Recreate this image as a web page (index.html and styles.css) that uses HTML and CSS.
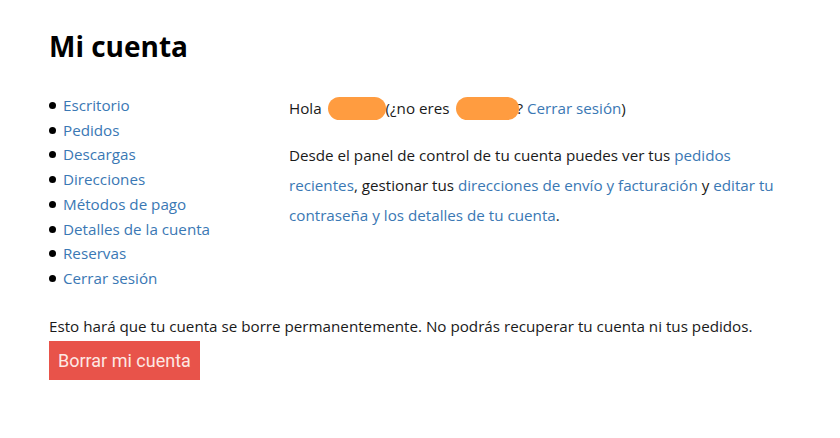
FILE: index.html
```html
<!DOCTYPE html>
<html lang="es">
<head>
    <meta charset="UTF-8">
    <meta name="viewport" content="width=device-width, initial-scale=1.0">
    <title>Mi cuenta</title>
    <link rel="stylesheet" href="styles.css">
</head>
<body>
    <div class="account">
        <h1 class="account-title">Mi cuenta</h1>
        <div class="account-body">
            <ul class="account-nav">
                <li><a href="#">Escritorio</a></li>
                <li><a href="#">Pedidos</a></li>
                <li><a href="#">Descargas</a></li>
                <li><a href="#">Direcciones</a></li>
                <li><a href="#">Métodos de pago</a></li>
                <li><a href="#">Detalles de la cuenta</a></li>
                <li><a href="#">Reservas</a></li>
                <li><a href="#">Cerrar sesión</a></li>
            </ul>
            <div class="account-content">
                <p class="greeting">Hola <span class="redacted">usuario</span>(¿no eres <span class="redacted redacted-wide">usuario</span>? <a href="#">Cerrar sesión</a>)</p>
                <p class="intro">Desde el panel de control de tu cuenta puedes ver tus <a href="#">pedidos recientes</a>, gestionar tus <a href="#">direcciones de envío y facturación</a> y <a href="#">editar tu contraseña y los detalles de tu cuenta</a>.</p>
            </div>
        </div>
        <p class="delete-note">Esto hará que tu cuenta se borre permanentemente. No podrás recuperar tu cuenta ni tus pedidos.</p>
        <button class="delete-btn">Borrar mi cuenta</button>
    </div>
</body>
</html>
```

FILE: styles.css
```css
body {
    margin: 0;
    background: #fff;
    color: #1a1a1a;
    font-family: 'Open Sans', sans-serif;
    font-size: 15.2px;
}
a {
    color: #3a78b4;
    text-decoration: none;
}
.account {
    padding: 26px 49px;
}
.account-title {
    margin: 0 0 27px;
    font-size: 28px;
    font-weight: 700;
    line-height: 40px;
    color: #000;
}
.account-body {
    display: flex;
}
.account-nav {
    width: 226px;
    margin: 0;
    padding: 0 0 0 14px;
    list-style: none;
    line-height: 24.7px;
}
.account-nav li {
    position: relative;
}
.account-nav li::before {
    content: "";
    position: absolute;
    left: -14px;
    top: 9px;
    width: 7px;
    height: 7px;
    border-radius: 50%;
    background: #000;
}
.account-content {
    flex: 1;
}
.account-content p {
    margin: 0;
}
.greeting {
    padding-top: 3px;
    line-height: 24px;
    margin-bottom: 20px !important;
}
.intro {
    line-height: 30px;
}
.redacted {
    display: inline-block;
    width: 58px;
    height: 23px;
    margin-left: 2px;
    vertical-align: -6px;
    border-radius: 12px;
    background: #ff9c40;
    color: transparent;
    overflow: hidden;
}
.redacted-wide {
    width: 63px;
    margin-left: 3px;
    margin-right: -3px;
    position: relative;
}
.delete-note {
    margin: 25px 0 5px;
    line-height: 20px;
}
.delete-btn {
    padding: 10px 9px 9px;
    border: none;
    border-radius: 0;
    background: #e8534a;
    color: #fde8e4;
    font-family: Roboto, sans-serif;
    font-size: 18px;
    line-height: 20px;
    cursor: pointer;
}
```
